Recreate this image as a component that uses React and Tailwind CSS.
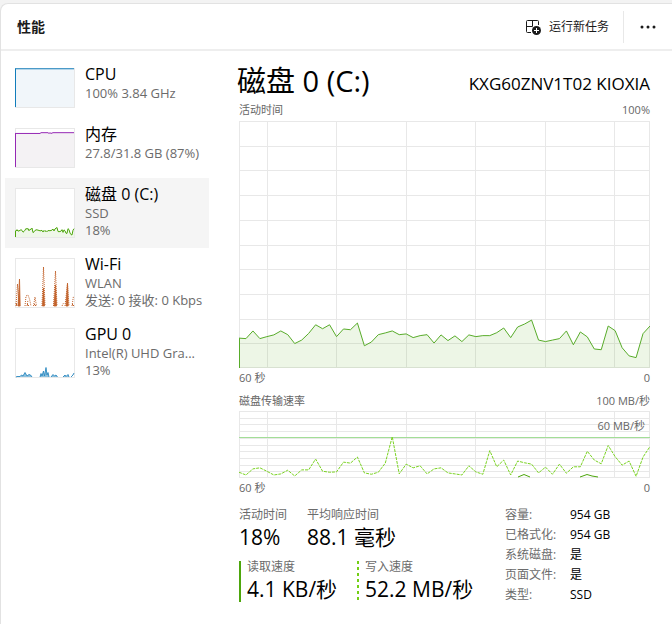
const CPU = Array(60).fill(98);
const MEMORY = [
  ...Array(26).fill(86), ...Array(8).fill(88), 86, 88, 86, 87, ...Array(22).fill(88),
];
const ACTIVE = [
  12.1, 11.9, 15, 11.9, 12.7, 13.4, 15, 13.5, 9.9, 11.3, 14, 17.5, 15.9, 17.5, 12.7, 15.8, 15.5, 18.2,
  9, 10.5, 13.5, 14.2, 15, 13.5, 13.8, 12.3, 13.1, 13.5, 10.1, 13.4, 11.1, 13, 10.7, 13.4, 12.7, 13.1,
  13.1, 14.3, 16.2, 12.3, 16.6, 17.8, 19.4, 11.3, 10.7, 11.3, 11.9, 15, 9.4, 14.6, 12.6, 7.7, 7.4, 17,
  15.1, 8.2, 4.9, 4.2, 13.9, 17,
];
const WRITE = [
  8.6, 4.5, 13.6, 15.2, 10.1, 4.5, 6.1, 11.6, 3, 12.1, 12.1, 28.3, 10.1, 8.6, 9.1, 23.7, 22.2, 31.3, 7.6,
  5.6, 8.6, 22.2, 61.6, 6.1, 20.7, 15.2, 18.2, 6.1, 13.6, 15.2, 7.6, 6.1, 4.5, 18.2, 9.1, 5.6, 40.9,
  16.7, 26.8, 4.5, 25.3, 22.7, 20.7, 7.6, 16.2, 5.6, 20.7, 7.1, 16.7, 16.7, 39.9, 26.8, 21.2, 48.5,
  31.8, 19.2, 25.3, 2.5, 31.3, 47,
];

const toPoints = (data, w, h) =>
  data.map((v, i) => `${((i * w) / (data.length - 1)).toFixed(2)},${(h - (v * h) / 100).toFixed(2)}`).join(" ");

function Area({ data, w, h, stroke, fill }) {
  const points = toPoints(data, w, h);
  return (
    <>
      <polygon points={`0,${h} ${points} ${w},${h}`} fill={fill} />
      <polyline points={points} fill="none" stroke={stroke} vectorEffect="non-scaling-stroke" />
      <path d={`M.5 ${h - (data[0] * h) / 100}V${h}`} stroke={stroke} vectorEffect="non-scaling-stroke" />
    </>
  );
}

function Grid({ h }) {
  const columns = [28.5, 97.5, 167.5, 236.5, 306.5, 375.5];
  return (
    <g stroke="#e8e8e8" fill="none" shapeRendering="crispEdges">
      {columns.map((x) => (
        <path key={x} d={`M${x} 0V${h}`} vectorEffect="non-scaling-stroke" />
      ))}
      {Array.from({ length: 9 }, (_, i) => Math.round(((i + 1) * h) / 10) + 0.5).map((y) => (
        <path key={y} d={`M0 ${y}H411`} vectorEffect="non-scaling-stroke" />
      ))}
      <rect x="0.5" y="0.5" width="410" height={h - 1} vectorEffect="non-scaling-stroke" />
    </g>
  );
}

function WifiGraph() {
  return (
    <g stroke="#c2622b">
      <path d="M1 48 2.500 26 4 48M10 48 11 38 13 37 14.500 41 16 48M12 48 13 42M18.500 48 20 39 21.500 48M27 48 28.500 9 30 48M38.500 48 40.500 13 42 48M47 48 48.500 45M50 48 52.500 26 54 48M57 48 58.500 38" fill="none" strokeDasharray="1 1" />
      <path d="M3 48 4.500 21 5.200 48ZM27.500 48 28.500 30 29.500 48ZM39 48 40.500 27 41.500 48ZM51 48 52.500 25 53.200 48Z" fill="#c2622b" strokeWidth="0.800" />
      <path d="M1 45 2 48M12 46 14 48M19 46 21 48M57 46 59 48" fill="none" />
    </g>
  );
}

function GpuGraph() {
  return (
    <path d="M1 49 2 48.500 5 48.500 6.500 47 8 48 10 44.500 12 48 14 46.500 15.500 47 17 49M25 49 26 45.500 27 48 28.500 43 29.500 48 31 39.500 32 47 33 44.500 34 49M36 49 38 46.500 39.500 48 41 47 42.500 49M48 49 50 47 51 48.500 53 46.500 54 49M56 49 58 47 59 45" fill="#8dc1de" stroke="#2a88bf" strokeWidth="0.900" />
  );
}

const ITEMS = [
  { title: "CPU", lines: ["100% 3.84 GHz"], h: 40, graph: <Area data={CPU} w={59} h={39} stroke="#117dbb" fill="#f1f6fa" /> },
  { title: "内存", lines: ["27.8/31.8 GB (87%)"], h: 40, graph: <Area data={MEMORY} w={59} h={39} stroke="#9528b4" fill="#f4f2f4" /> },
  { title: "磁盘 0 (C:)", lines: ["SSD", "18%"], h: 50, active: true, graph: <Area data={ACTIVE} w={59} h={49} stroke="#4da60c" fill="#eff7e9" /> },
  { title: "Wi-Fi", lines: ["WLAN", "发送: 0 接收: 0 Kbps"], h: 50, graph: <WifiGraph /> },
  { title: "GPU 0", lines: ["Intel(R) UHD Gra...", "13%"], h: 50, graph: <GpuGraph /> },
];

function SidebarItem({ item }) {
  return (
    <button
      type="button"
      aria-pressed={!!item.active}
      className={`flex w-full items-start gap-2.5 pl-2.5 text-left ${item.h === 40 ? "h-[60px]" : "h-[70px]"} ${item.active ? "bg-[#f5f5f5]" : ""}`}
    >
      <svg width="60" height={item.h} viewBox={`0 0 60 ${item.h}`} className="mt-2.5 shrink-0 bg-white">
        <rect x="0.5" y="0.5" width="59" height={item.h - 1} fill="none" stroke="#e8e8e8" />
        {item.graph}
      </svg>
      <span className="block pt-[5px] whitespace-nowrap">
        <span className="block text-base leading-[22px] text-black">{item.title}</span>
        {item.lines.map((line) => (
          <span key={line} className="block text-[13px] leading-[17px] text-[#6b6b6b]">{line}</span>
        ))}
      </span>
    </button>
  );
}

function Labels({ left, right, className = "" }) {
  return (
    <div className={`flex justify-between text-[11px] text-[#666] ${className}`}>
      <span>{left}</span>
      <span>{right}</span>
    </div>
  );
}

function Stat({ label, value }) {
  return (
    <div className="whitespace-nowrap">
      <dt className="text-xs leading-4 text-[#6b6b6b]">{label}</dt>
      <dd className="text-[21px] leading-7 text-black">{value}</dd>
    </div>
  );
}

const DETAILS = [
  ["容量:", "954 GB"],
  ["已格式化:", "954 GB"],
  ["系统磁盘:", "是"],
  ["页面文件:", "是"],
  ["类型:", "SSD"],
];

export default function App() {
  return (
    <div className="flex min-h-screen flex-col bg-[#f3f3f3] pt-[3px] font-['Open_Sans','Noto_Sans_CJK_SC',sans-serif]">
      <div className="flex-1 rounded-tl-lg border-t border-l border-[#e2e2e2] bg-white">
        <header className="flex h-[47px] items-center border-b-2 border-[#eeeeee] pl-4">
          <h1 className="flex-1 text-sm font-semibold text-[#1b1b1b]">性能</h1>
          <button type="button" className="flex items-center gap-2 text-xs text-[#1b1b1b]">
            <svg width="16" height="16" viewBox="0 0 16 16" fill="none" stroke="#1b1b1b">
              <path d="M6 13.500H2.500Q1.500 13.500 1.500 12.500V2.500Q1.500 1.500 2.500 1.500H12.500Q13.500 1.500 13.500 2.500V6M7.500 1.500V7.500M1.500 7.500H7.500" />
              <circle cx="11.500" cy="11.500" r="4.500" fill="#1b1b1b" stroke="none" />
              <path d="M11.500 9v5M9 11.500h5" stroke="#fff" />
            </svg>
            运行新任务
          </button>
          <span className="ml-3.5 h-8 w-px bg-[#e8e8e8]" />
          <button type="button" aria-label="更多" className="flex w-12 justify-center">
            <svg width="18" height="4" viewBox="0 0 18 4" fill="#1b1b1b">
              <circle cx="3" cy="2" r="1.500" />
              <circle cx="9" cy="2" r="1.500" />
              <circle cx="15" cy="2" r="1.500" />
            </svg>
          </button>
        </header>

        <div className="flex">
          <nav className="w-[208px] shrink-0 pt-[7px] pl-1">
            {ITEMS.map((item) => (
              <SidebarItem key={item.title} item={item} />
            ))}
          </nav>

          <main className="min-w-0 flex-1 pt-3 pr-[22px] pl-7">
            <div className="flex items-center justify-between whitespace-nowrap text-black">
              <h2 className="text-[29px] leading-9">磁盘 0 (C:)</h2>
              <span className="pt-1.5 text-[17px] leading-6">KXG60ZNV1T02 KIOXIA</span>
            </div>
            <div className="pl-0.5">
              <Labels left="活动时间" right="100%" className="py-0.5 leading-[18px]" />
              <svg viewBox="0 0 411 247" preserveAspectRatio="none" className="block h-[247px] w-full">
                <Grid h={247} />
                <Area data={ACTIVE} w={411} h={247} stroke="#58ac2a" fill="rgba(77,166,12,0.1)" />
              </svg>
              <Labels left="60 秒" right="0" className="leading-5" />
              <Labels left="磁盘传输速率" right="100 MB/秒" className="pt-[3px] leading-5" />
              <div className="relative">
                <svg viewBox="0 0 411 67" preserveAspectRatio="none" className="block h-[67px] w-full">
                  <Grid h={67} />
                  <path d="M0 26.500H411" stroke="#a3de97" vectorEffect="non-scaling-stroke" />
                  <path d="M279 66 285 63.500 291 66M341 66 348 63.500 353 65 359 66" fill="none" stroke="#4da60c" vectorEffect="non-scaling-stroke" />
                  <polyline points={toPoints(WRITE, 411, 67)} fill="none" stroke="#7ad322" strokeDasharray="3 1" vectorEffect="non-scaling-stroke" />
                </svg>
                <span className="absolute top-1.5 right-[5px] text-[11px] leading-[18px] text-[#666]">60 MB/秒</span>
              </div>
              <Labels left="60 秒" right="0" className="leading-5" />

              <div className="flex pt-[7px]">
                <div className="w-[266px] shrink-0 pt-0.5">
                  <dl className="flex gap-5">
                    <Stat label="活动时间" value="18%" />
                    <Stat label="平均响应时间" value="88.1 毫秒" />
                  </dl>
                  <dl className="flex pt-2">
                    <div className="flex w-[118px] gap-1.5">
                      <span className="mt-0.5 h-[41px] w-0.5 bg-[#4da60c]" />
                      <Stat label="读取速度" value="4.1 KB/秒" />
                    </div>
                    <div className="flex gap-1.5">
                      <span className="mt-0.5 h-[41px] w-0.5 bg-[repeating-linear-gradient(#73cf16_0_3px,transparent_3px_6px)]" />
                      <Stat label="写入速度" value="52.2 MB/秒" />
                    </div>
                  </dl>
                </div>
                <dl className="text-xs leading-5 whitespace-nowrap">
                  {DETAILS.map(([label, value]) => (
                    <div key={label} className="flex">
                      <dt className="w-[65px] text-[#6b6b6b]">{label}</dt>
                      <dd className="text-black">{value}</dd>
                    </div>
                  ))}
                </dl>
              </div>
            </div>
          </main>
        </div>
      </div>
    </div>
  );
}
